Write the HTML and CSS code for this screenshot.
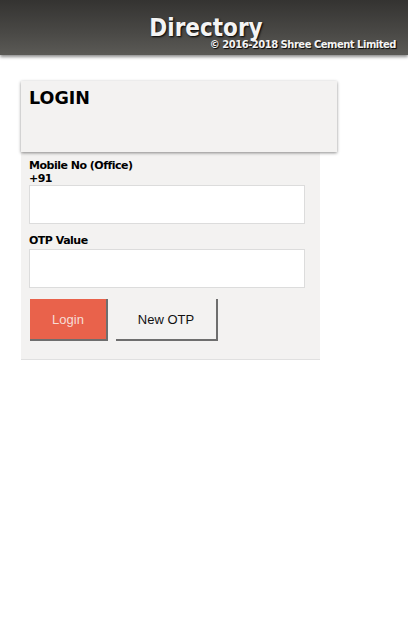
FILE: index.html
```html
<!DOCTYPE html>
<html>
<head>
<meta charset="utf-8">
<link rel="stylesheet" href="styles.css">
</head>
<body>
<header class="topbar">
  <div class="title">Directory</div>
  <div class="copy">© 2016-2018 Shree Cement Limited</div>
</header>
<main class="content">
  <section class="login-head">
    <h2 class="login-title">LOGIN</h2>
  </section>
  <section class="login-form">
    <div class="label">Mobile No (Office)</div>
    <div class="label prefix">+91</div>
    <input class="field" type="text">
    <div class="label otp">OTP Value</div>
    <input class="field" type="text">
    <div class="actions">
      <button class="btn btn-login">Login</button>
      <button class="btn btn-otp">New OTP</button>
    </div>
  </section>
</main>
</body>
</html>
```

FILE: styles.css
```css
html, body {
  margin: 0;
  padding: 0;
  background: #ffffff;
  font-family: "DejaVu Sans", Verdana, sans-serif;
}
.topbar {
  height: 55px;
  background: linear-gradient(to bottom, #343331 0%, #4a4946 60%, #5b5a56 100%);
  box-shadow: 0 2px 3px rgba(0,0,0,0.45);
  position: relative;
  display: flex;
  flex-direction: column;
}
.title {
  color: #f4f4f4;
  font-weight: bold;
  font-size: 24px;
  font-stretch: condensed;
  line-height: 28px;
  padding-top: 14px;
  padding-left: 4px;
  text-align: center;
  text-shadow: 1px 1px 2px #000;
}
.copy {
  color: #f4f4f4;
  font-weight: bold;
  font-size: 10px;
  letter-spacing: -0.5px;
  line-height: 12px;
  margin-top: -3px;
  text-align: right;
  padding-right: 12px;
  text-shadow: 1px 1px 1px #000;
}
.content {
  padding: 26px 0 0 21px;
}
.login-head {
  width: 316px;
  height: 71px;
  background: #f3f2f1;
  box-shadow: 0 1px 3px rgba(0,0,0,0.45);
  box-sizing: border-box;
  padding: 8px 8px;
  position: relative;
}
.login-title {
  margin: 0;
  font-size: 17.5px;
  line-height: 18px;
  font-weight: bold;
  color: #000;
}
.login-form {
  width: 299px;
  background: #f3f2f1;
  box-sizing: border-box;
  padding: 7px 15px 18px 8px;
  border-bottom: 1px solid #e0e0e0;
  display: flex;
  flex-direction: column;
}
.label {
  font-size: 11px;
  font-weight: bold;
  letter-spacing: -0.5px;
  line-height: 13px;
  color: #000;
}
.label.otp {
  margin-top: 10px;
  margin-bottom: 2px;
}
.field {
  display: block;
  width: 276px;
  height: 39px;
  box-sizing: border-box;
  border: 1px solid #dcdcdc;
  background: #fff;
  margin: 0;
  padding: 0;
}
.actions {
  display: flex;
  gap: 8px;
  margin-top: 11px;
  padding-left: 1px;
}
.btn {
  height: 42px;
  box-sizing: border-box;
  border: none;
  border-right: 2px solid #6e6e6e;
  border-bottom: 2px solid #6e6e6e;
  font-family: "Liberation Sans", Arial, sans-serif;
  font-size: 13px;
  padding: 0;
  margin: 0;
}
.btn-login {
  width: 78px;
  background: #e9624b;
  color: #f7ddd5;
}
.btn-otp {
  width: 102px;
  background: #f3f2f1;
  color: #111;
}
```
